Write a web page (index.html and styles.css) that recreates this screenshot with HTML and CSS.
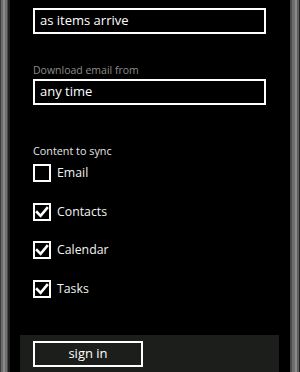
FILE: index.html
```html
<!DOCTYPE html>
<html>
<head>
<meta charset="utf-8">
<link rel="stylesheet" href="styles.css">
</head>
<body>
<div class="phone">
  <div class="bezel bezel-left"></div>
  <div class="screen">
    <div class="content">
      <div class="textbox first">as items arrive</div>
      <div class="label">Download email from</div>
      <div class="textbox">any time</div>
      <div class="section">Content to sync</div>
      <div class="check"><span class="box"></span><span class="ctext">Email</span></div>
      <div class="check"><span class="box on"><svg viewBox="0 0 18 18" width="18" height="18"><path d="M4 9.2 L7.6 12.8 L14 5.2" fill="none" stroke="#fff" stroke-width="2.6" stroke-linecap="square"/></svg></span><span class="ctext">Contacts</span></div>
      <div class="check"><span class="box on"><svg viewBox="0 0 18 18" width="18" height="18"><path d="M4 9.2 L7.6 12.8 L14 5.2" fill="none" stroke="#fff" stroke-width="2.6" stroke-linecap="square"/></svg></span><span class="ctext">Calendar</span></div>
      <div class="check"><span class="box on"><svg viewBox="0 0 18 18" width="18" height="18"><path d="M4 9.2 L7.6 12.8 L14 5.2" fill="none" stroke="#fff" stroke-width="2.6" stroke-linecap="square"/></svg></span><span class="ctext">Tasks</span></div>
    </div>
    <div class="appbar">
      <div class="button">sign in</div>
    </div>
  </div>
  <div class="bezel bezel-right"></div>
</div>
</body>
</html>
```
FILE: styles.css
```css
html, body {
  margin: 0;
  padding: 0;
  background: #000;
}
body {
  width: 300px;
  height: 372px;
  overflow: hidden;
  font-family: "Open Sans", "Noto Sans", sans-serif;
  color: #fff;
}
.phone {
  display: flex;
  width: 300px;
  height: 372px;
}
.bezel {
  width: 10px;
  flex: none;
}
.bezel-left {
  background: linear-gradient(to right, #3c3c3c 0, #3c3c3c 1px, #6a6a6a 1px, #6a6a6a 3px, #8a8a8a 3px, #8a8a8a 5px, #707070 5px, #707070 7px, #4a4a4a 7px, #4a4a4a 8px, #1e1e1e 8px, #1e1e1e 10px);
}
.bezel-right {
  background: linear-gradient(to right, #4a4a4a 0, #4a4a4a 2px, #6e6e6e 2px, #6e6e6e 5px, #8a8a8a 5px, #8a8a8a 7px, #5e5e5e 7px, #5e5e5e 9px, #222 9px, #222 10px);
}
.screen {
  flex: 1;
  display: flex;
  flex-direction: column;
  background: #000;
}
.content {
  flex: 1;
  padding-left: 23px;
  display: flex;
  flex-direction: column;
}
.textbox {
  box-sizing: border-box;
  width: 233px;
  height: 26px;
  border: 2px solid #fff;
  font-size: 13px;
  line-height: 21px;
  padding-left: 5px;
  color: #fff;
}
.textbox.first {
  margin-top: 8px;
}
.label {
  margin-top: 29px;
  font-size: 10.5px;
  line-height: 15px;
  color: #8c8c8c;
  margin-bottom: 1px;
}
.section {
  margin-top: 38px;
  font-size: 10.8px;
  line-height: 15px;
  color: #e6e6e6;
  margin-bottom: 6px;
}
.check {
  display: flex;
  align-items: center;
  height: 18px;
  margin-bottom: 20.5px;
}
.box {
  box-sizing: border-box;
  width: 18px;
  height: 18px;
  border: 2px solid #fff;
  position: relative;
  flex: none;
}
.box svg {
  position: absolute;
  left: -2px;
  top: -2px;
}
.ctext {
  margin-left: 6px;
  font-size: 12.3px;
  line-height: 18px;
  color: #f2f2f2;
}
.appbar {
  flex: none;
  height: 37px;
  margin: 0 11px 0 10px;
  background: #1b1e1b;
  padding: 6px 0 0 13px;
  box-sizing: border-box;
}
.button {
  box-sizing: border-box;
  width: 110px;
  height: 26px;
  border: 2px solid #fff;
  text-align: center;
  font-size: 13px;
  line-height: 21px;
  color: #fff;
}
```
